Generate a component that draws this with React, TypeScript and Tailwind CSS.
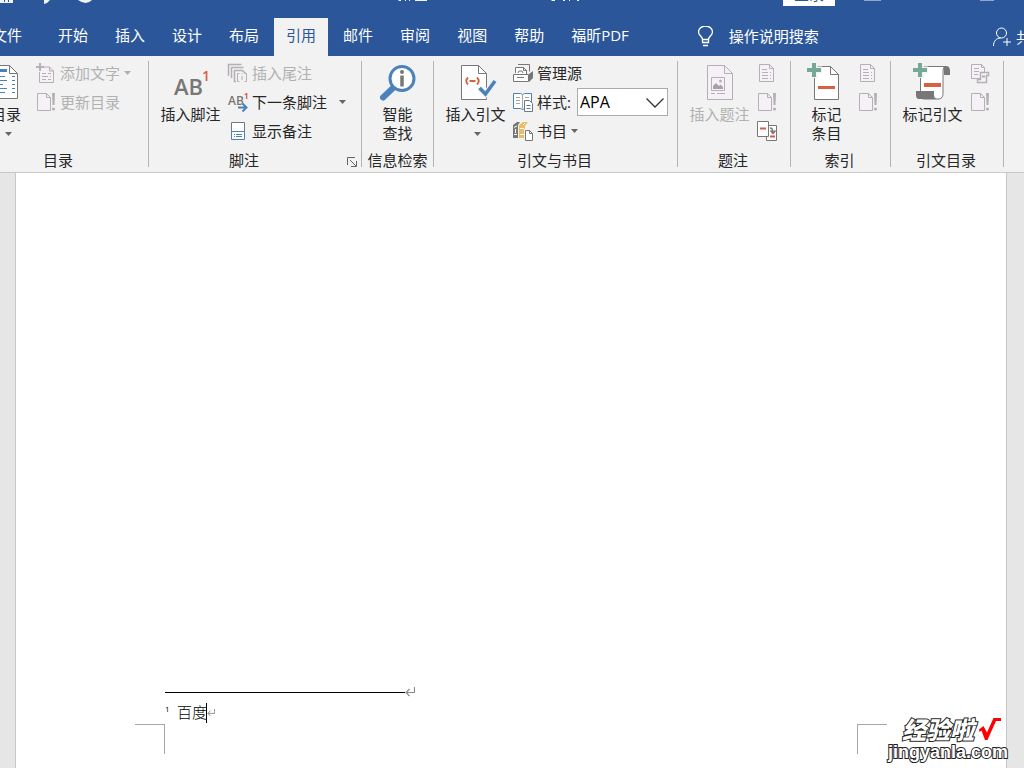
import type { ReactNode } from "react";

const GRAY = "#777777";
const MUTED = "#b5b0b5";
const BLUE = "#4a82bd";
const ORANGE = "#d85f3f";
const GREEN = "#74a897";

const tabs = ["开始", "插入", "设计", "布局", "引用", "邮件", "审阅", "视图", "帮助", "福昕PDF"];

function BigIcon({ children }: { children: ReactNode }) {
  return (
    <svg width="40" height="44" viewBox="0 0 40 44" fill="none" className="shrink-0 overflow-visible" aria-hidden="true">
      {children}
    </svg>
  );
}

function SmallIcon({ children }: { children: ReactNode }) {
  return (
    <svg width="20" height="20" viewBox="0 0 20 20" fill="none" className="shrink-0 overflow-visible" aria-hidden="true">
      {children}
    </svg>
  );
}

function Arrow({ className = "" }: { className?: string }) {
  return (
    <svg width="7" height="4" viewBox="0 0 7 4" className={`shrink-0 ${className}`} aria-hidden="true">
      <path d="M0 0h7L3.5 4z" fill="currentColor" />
    </svg>
  );
}

function TocIcon() {
  return (
    <BigIcon>
      <path d="M6.5 4.5h17l8 8v25h-25z" fill="#fff" stroke={GRAY} />
      <path d="M23.5 4.5v8h8" stroke={GRAY} />
      <path d="M9 8h12v3H9z" fill={BLUE} />
      <path
        d="M9 15.5h10M9 19.5h12M9 23.5h8M9 27.5h12M9 31.5h10M26 15.5h3M26 19.5h3M26 23.5h3M26 27.5h3M26 31.5h3"
        stroke={BLUE}
      />
    </BigIcon>
  );
}

function FootnoteIcon() {
  return (
    <BigIcon>
      <text x="3" y="34" fontSize="22" fontWeight="600" fill={GRAY}>AB</text>
      <text x="31" y="20" fontSize="14" fontWeight="600" fill={ORANGE}>1</text>
    </BigIcon>
  );
}

function LookupIcon() {
  return (
    <BigIcon>
      <path d="M15 27 5 36.5" stroke={BLUE} strokeWidth="6" strokeLinecap="round" />
      <circle cx="24" cy="17.5" r="12" fill="#fff" stroke={BLUE} strokeWidth="3" />
      <circle cx="24" cy="11" r="2" fill={GRAY} />
      <path d="M24 14.5v11" stroke={GRAY} strokeWidth="3.5" />
    </BigIcon>
  );
}

function CitationIcon() {
  return (
    <BigIcon>
      <path d="M5.5 4.5h17l8 8v26h-25z" fill="#fff" stroke={GRAY} />
      <path d="M22.5 4.5v8h8" stroke={GRAY} />
      <path d="M12 16.5q-3.500 3.500 0 7M21 16.5q3.500 3.500 0 7M13.5 20h6" stroke={ORANGE} strokeWidth="1.8" />
      <path d="m23.5 27 6 6 9.5-13" stroke="#f2f2f2" strokeWidth="6" />
      <path d="m23.5 27 6 6 9.5-13" stroke={BLUE} strokeWidth="3.5" />
    </BigIcon>
  );
}

function CaptionIcon() {
  return (
    <BigIcon>
      <path d="M7.5 4.5h17l8 8v26h-25z" fill="#f6f0f7" stroke={MUTED} />
      <path d="M24.5 4.5v8h8M11.5 16.5h13v13h-13z" stroke={MUTED} />
      <path d="M13 28v-3l3-3 3 3 1.5-1.5L23 26v2z" fill="#a6a1a6" />
      <circle cx="20.5" cy="20" r="1.5" fill={MUTED} />
      <path d="M11 32.5h4M17 32.5h8" stroke={MUTED} />
    </BigIcon>
  );
}

function MarkEntryIcon() {
  return (
    <BigIcon>
      <path d="M7.5 5.5h16l8 8v25h-24z" fill="#fff" stroke={GRAY} />
      <path d="M23.5 5.5v8h8" stroke={GRAY} />
      <path d="M7 1v16M-1 9h16" stroke="#f2f2f2" strokeWidth="7" />
      <path d="M7 2v14M0 9h14" stroke={GREEN} strokeWidth="4" />
      <path d="M11 26.5h17" stroke={ORANGE} strokeWidth="3" />
    </BigIcon>
  );
}

function MarkCitationIcon() {
  return (
    <BigIcon>
      <path d="M28 5h5q4 0 4 5v4h-6V9z" fill={GRAY} />
      <path d="M7.5 5.5h24q-2 2-1.5 8v19q0 5-4 5.5H11q-3.5 0-3.5-5z" fill="#fff" stroke={GRAY} />
      <path d="M3 30h18v4q0 4 4 4H6q-3 0-3-4z" fill={GRAY} />
      <path d="M7 1v16M-1 9h16" stroke="#f2f2f2" strokeWidth="7" />
      <path d="M7 2v14M0 9h14" stroke={GREEN} strokeWidth="4" />
      <path d="M11 24h17" stroke={ORANGE} strokeWidth="4" />
    </BigIcon>
  );
}

function AddTextIcon() {
  return (
    <SmallIcon>
      <path d="M3.5 9v10.5h14V8l-4-4H8" fill="#f6f0f7" stroke={MUTED} />
      <path d="M13.5 4v4h4M6 10.5h4M12 10.5h3M6 13.5h6M14 13.5h1M6 16.5h4M12 16.5h3" stroke={MUTED} />
      <path d="M4 0v8M0 4h8" stroke={MUTED} strokeWidth="2" />
    </SmallIcon>
  );
}

function UpdateIcon() {
  return (
    <SmallIcon>
      <path d="M1.5 1.5h9l4 4v13h-13z" fill="#f6f0f7" stroke={MUTED} />
      <path d="M10.5 1.5v4h4" stroke={MUTED} />
      <path d="M16 1h3l-.5 12h-2z" fill={MUTED} />
      <circle cx="17.5" cy="17" r="1.6" fill={MUTED} />
    </SmallIcon>
  );
}

function TableIcon() {
  return (
    <SmallIcon>
      <path d="M2.5 1.5h10l4 4v13h-14z" fill="#f6f0f7" stroke={MUTED} />
      <path d="M12.5 1.5v4h4M5 6.5h5M5 9.5h6M13 9.5h1M5 12.5h6M13 12.5h1M5 15.5h6M13 15.5h1" stroke={MUTED} />
    </SmallIcon>
  );
}

function CitationTableIcon() {
  return (
    <SmallIcon>
      <path d="M1.5 1.5h10l3 3v11h-13z" fill="#f6f0f7" stroke={MUTED} />
      <path d="M11.5 1.5v3h3M4 5.5h5M4 8.5h5M4 11.5h4" stroke={MUTED} />
      <path d="M10.5 9.5h8v3h-2v7h-9v-3h3z" fill="#f6f0f7" stroke={MUTED} strokeWidth="1.5" />
      <path d="M12 13.5h3" stroke={MUTED} strokeWidth="2" />
    </SmallIcon>
  );
}

function EndnoteIcon() {
  return (
    <SmallIcon>
      <path d="M.5 13V1.5h13M3.5 15V4.5h12M8 18.5H6.5v-11h8l3 3" stroke={MUTED} strokeWidth="1.5" />
      <path d="M11.5 10.5h-2v8h2M16.5 10.5h2v8h-2M14 13v4M14 10.5v1" stroke={MUTED} />
    </SmallIcon>
  );
}

function NextFootnoteIcon() {
  return (
    <SmallIcon>
      <text x="0" y="13" fontSize="12" fontWeight="600" fill={GRAY}>AB</text>
      <text x="16" y="7" fontSize="8" fontWeight="700" fill={ORANGE}>1</text>
      <path d="M10 15.5h8M14.5 11.5l4 4-4 4" stroke="#f2f2f2" strokeWidth="4" />
      <path d="M10 15.5h8M14.5 11.5l4 4-4 4" stroke={BLUE} strokeWidth="2" />
    </SmallIcon>
  );
}

function ShowNotesIcon() {
  return (
    <SmallIcon>
      <path d="M3.5 1.5h13v9h-13z" fill="#fff" stroke={GRAY} />
      <path d="M3.5 10.5h13v8h-13z" fill="#fff" stroke={BLUE} />
      <path d="M6 13.5h1M8 13.5h6M6 15.5h1M8 15.5h6" stroke={BLUE} />
    </SmallIcon>
  );
}

function SourcesIcon() {
  return (
    <SmallIcon>
      <path d="M5 1.5h11.5v7" stroke={GRAY} />
      <path d="M2.5 10V4.5h8l3 3V12" fill="#fff" stroke={GRAY} />
      <path d="M10.5 4.5v3h3M5 10l1-2h3l1 2" stroke={GRAY} />
      <path d="M.5 11.5h15v7H.5z" fill="#fff" stroke={GRAY} />
      <path d="m16 11 4-3v7l-4 4z" fill={GRAY} />
      <path d="M4 14.5h7" stroke={GRAY} />
    </SmallIcon>
  );
}

function StyleIcon() {
  return (
    <SmallIcon>
      <path d="M.5 1.5h7l2 1 2-1h7v15h-7l-2 1-2-1h-7z" fill="#fff" stroke={BLUE} />
      <path d="M9.5 2.5v14M3 5.5h4M3 8.5h4M3 11.5h4M12 5.5h4M12 8.5h1" stroke="#a6a6a6" />
      <path d="M11.5 8.5h5l3 3v8h-8z" fill="#fff" stroke={GRAY} />
      <path d="M13.5 13.5h4M13.5 16.5h4" stroke={BLUE} />
    </SmallIcon>
  );
}

function BookIcon() {
  return (
    <SmallIcon>
      <path d="M0 4 4 1h3L5 4v13H0z" fill={GRAY} />
      <path d="m6 4 4-3h5l-3 4v12H6z" fill="#e8bd67" />
      <path d="M1 6.5 4 5M1 13.5h3M7 7.5h4M7 13.5h4M10 4l2-2" stroke="#fff" />
      <path d="M2.5 8v4" stroke="#fff" />
      <path d="M11 8h6l4 4v8H11z" fill="#f2f2f2" />
      <path d="M12.5 9.5h4l3 3v7h-7z" fill="#fff" stroke={GRAY} />
      <path d="M16.5 9.5v3h3" stroke={GRAY} />
    </SmallIcon>
  );
}

function CrossReferenceIcon() {
  return (
    <SmallIcon>
      <path d="M9.5 4.5h10v15h-10z" fill="#fff" stroke={GRAY} />
      <path d="M.5.5h11v15H.5z" fill="#fff" stroke={GRAY} />
      <path d="M3 7.5h6M13 15.5h5" stroke={ORANGE} strokeWidth="2" />
      <path d="M13 7c2 0 3 1 3 5M13.5 9.5l2.5 3 2.5-3" stroke={GRAY} strokeWidth="1.5" />
    </SmallIcon>
  );
}

type BigButtonProps = {
  icon: ReactNode;
  lines: string[];
  width: string;
  menu?: boolean;
  disabled?: boolean;
};

function BigButton({ icon, lines, width, menu, disabled }: BigButtonProps) {
  return (
    <button
      type="button"
      disabled={disabled}
      className={`flex shrink-0 flex-col items-center leading-[19px] whitespace-nowrap disabled:text-[#b1b1b1] ${width}`}
    >
      {icon}
      {lines.map((line) => (
        <span key={line}>{line}</span>
      ))}
      {menu && <Arrow className="mt-2 ml-1 text-[#666]" />}
    </button>
  );
}

type SmallButtonProps = {
  icon: ReactNode;
  text?: string;
  label?: string;
  disabled?: boolean;
  children?: ReactNode;
};

function SmallButton({ icon, text, label, disabled, children }: SmallButtonProps) {
  return (
    <button
      type="button"
      disabled={disabled}
      aria-label={label}
      className="flex h-6 items-center gap-1 leading-6 whitespace-nowrap disabled:text-[#b1b1b1]"
    >
      {icon}
      {text}
      {children}
    </button>
  );
}

type GroupProps = {
  title: string;
  className: string;
  launcher?: boolean;
  children: ReactNode;
};

function Group({ title, className, launcher, children }: GroupProps) {
  return (
    <section className={`flex h-[106px] shrink-0 flex-col border-r border-[#b4b4b4] ${className}`}>
      <div className="flex flex-1 items-start">{children}</div>
      <div className="flex leading-[14px]">
        <h2 className="flex-1 text-center whitespace-nowrap">{title}</h2>
        {launcher && (
          <button type="button" aria-label={title} className="flex w-[22px] items-end justify-end pr-1">
            <svg width="10" height="10" viewBox="0 0 10 10" fill="none" stroke="#666" aria-hidden="true">
              <path d="M.5 8V.5H8M3 3l6 6M9.5 4v5.5H4" />
            </svg>
          </button>
        )}
      </div>
    </section>
  );
}

function Column({ children }: { children: ReactNode }) {
  return <div className="flex flex-col gap-[5px]">{children}</div>;
}

function TitleBar() {
  return (
    <div className="flex h-[18px] items-start overflow-hidden">
      <svg width="581" height="6" viewBox="0 0 581 6" fill="#f2f2f2" className="shrink-0" aria-hidden="true">
        <path d="M0 0h13v3H0z" />
        <path d="M4 0h1v2H4zM8 0h1v2H8z" fill="#2b579a" />
        <path d="M44 0h6q-2 3-6 4zM78 0h14q-6 6-14 0z" />
        <path d="M399 0h2v1h-3zM405 0h1v1h-1zM409 0h1v1h-1zM415 0h12v1h-12zM552 0h3v1h-4zM563 0h2v1h-2zM569 0h1v1h-1zM577 0h2v1h-2z" />
      </svg>
      <button type="button" className="-mt-[18px] ml-auto h-6 w-[52px] shrink-0 bg-white text-center leading-6 text-[#2b579a]">
        登录
      </button>
      <svg width="189" height="2" viewBox="0 0 189 2" fill="#8fa8cd" className="shrink-0" aria-hidden="true">
        <path d="M29 0h17v1H29zM145 0h14v1h-14z" />
      </svg>
    </div>
  );
}

function TabBar() {
  return (
    <nav className="-ml-5 flex h-[38px] items-stretch gap-[3px] leading-[35px] whitespace-nowrap">
      <a href="#file" className="mr-[9px] px-3">文件</a>
      {tabs.map((tab) => (
        <a
          key={tab}
          href="#tab"
          aria-current={tab === "引用" ? "page" : undefined}
          className={tab === "引用" ? "bg-[#f2f2f2] px-3 text-[#2b579a]" : "px-3"}
        >
          {tab}
        </a>
      ))}
      <button type="button" className="ml-[54px] flex items-center gap-4 pb-0.5 leading-9">
        <svg width="15" height="21" viewBox="0 0 15 21" fill="none" stroke="#fff" aria-hidden="true">
          <path d="M4.5 13.5c0-3-4-4-4-7.5a7 6 0 0 1 14 0c0 3.5-4 4.5-4 7.5zM4.5 13.5v3h6v-3M5 19.5h5" strokeWidth="1.3" />
        </svg>
        操作说明搜索
      </button>
      <button type="button" className="mr-[-22px] ml-auto flex items-center gap-1 leading-9">
        <svg width="19" height="20" viewBox="0 0 19 20" fill="none" stroke="#fff" aria-hidden="true">
          <circle cx="8.5" cy="6" r="5" />
          <path d="M.5 19c0-5 3-8 7-8M14 11v8M10 15h8" />
        </svg>
        共享
      </button>
    </nav>
  );
}

function Ribbon() {
  return (
    <div className="flex overflow-hidden border-b border-[#c8c8c8] bg-[#f2f2f2] py-[5px] text-[#262626]">
      <Group title="目录" className="-ml-8 w-[181px] pl-3.5 [&>div:last-child]:-ml-3.5">
        <BigButton icon={<TocIcon />} lines={["目录"]} width="w-12" menu />
        <div className="pl-1.5">
          <Column>
            <SmallButton icon={<AddTextIcon />} text="添加文字" disabled>
              <Arrow />
            </SmallButton>
            <SmallButton icon={<UpdateIcon />} text="更新目录" disabled />
          </Column>
        </div>
      </Group>

      <Group title="脚注" className="w-[213px]" launcher>
        <BigButton icon={<FootnoteIcon />} lines={["插入脚注"]} width="ml-1 w-[75px]" />
        <Column>
          <SmallButton icon={<EndnoteIcon />} text="插入尾注" disabled />
          <SmallButton icon={<NextFootnoteIcon />} text="下一条脚注">
            <Arrow className="ml-2 text-[#666]" />
          </SmallButton>
          <SmallButton icon={<ShowNotesIcon />} text="显示备注" />
        </Column>
      </Group>

      <Group title="信息检索" className="w-[72px]">
        <BigButton icon={<LookupIcon />} lines={["智能", "查找"]} width="w-full" />
      </Group>

      <Group title="引文与书目" className="w-[244px] [&_h2]:pr-0.5">
        <BigButton icon={<CitationIcon />} lines={["插入引文"]} width="ml-1 w-[75px]" menu />
        <Column>
          <SmallButton icon={<SourcesIcon />} text="管理源" />
          <div className="flex h-6 items-center gap-1">
            <StyleIcon />
            <label htmlFor="citation-style" className="w-9 whitespace-nowrap">样式:</label>
            <div className="relative">
              <select
                id="citation-style"
                defaultValue="APA"
                className="block h-7 w-[91px] appearance-none border border-[#ababab] bg-white px-0.5 text-base text-black outline-none"
              >
                <option>APA</option>
              </select>
              <svg
                width="18"
                height="10"
                viewBox="0 0 18 10"
                fill="none"
                className="pointer-events-none absolute top-[10px] right-1"
                aria-hidden="true"
              >
                <path d="m.5.5 8.5 8.5 8.5-8.5" stroke="#333" strokeWidth="1.3" />
              </svg>
            </div>
          </div>
          <SmallButton icon={<BookIcon />} text="书目">
            <Arrow className="text-[#666]" />
          </SmallButton>
        </Column>
      </Group>

      <Group title="题注" className="w-[113px] [&_h2]:pr-0.5">
        <BigButton icon={<CaptionIcon />} lines={["插入题注"]} width="ml-1 w-[75px]" disabled />
        <Column>
          <SmallButton icon={<TableIcon />} label="插入表目录" disabled />
          <SmallButton icon={<UpdateIcon />} label="更新表格" disabled />
          <SmallButton icon={<CrossReferenceIcon />} label="交叉引用" />
        </Column>
      </Group>

      <Group title="索引" className="w-[100px] [&_h2]:pr-0.5">
        <BigButton icon={<MarkEntryIcon />} lines={["标记", "条目"]} width="ml-1 w-[63px]" />
        <Column>
          <SmallButton icon={<TableIcon />} label="插入索引" disabled />
          <SmallButton icon={<UpdateIcon />} label="更新索引" disabled />
        </Column>
      </Group>

      <Group title="引文目录" className="w-[113px] [&_h2]:pr-0.5">
        <BigButton icon={<MarkCitationIcon />} lines={["标记引文"]} width="ml-1 w-[75px]" />
        <Column>
          <SmallButton icon={<CitationTableIcon />} label="插入引文目录" disabled />
          <SmallButton icon={<UpdateIcon />} label="更新引文目录" disabled />
        </Column>
      </Group>
    </div>
  );
}

function ReturnMark({ size }: { size: number }) {
  return (
    <svg width={size} height={size} viewBox="0 0 10 10" fill="none" stroke="#8c8c8c" className="shrink-0" aria-hidden="true">
      <path d="M9.5 0v5.5H1M4.5 2 1 5.5 4.5 9" strokeWidth="1.2" />
    </svg>
  );
}

function Watermark() {
  return (
    <div className="absolute right-4 bottom-1.5 flex flex-col items-end text-white [paint-order:stroke_fill] [-webkit-text-stroke:2px_#222]">
      <div className="flex h-6 items-center gap-1 pr-1.5 text-[24px] leading-6 font-black italic">
        经验啦
        <svg width="24" height="24" viewBox="0 0 24 24" fill="none" className="shrink-0" aria-hidden="true">
          <path d="M1 11.5 5.500 8 9 14.500 15.500 0H23v3h-5L9.500 22H7L3.500 12.500 1.500 14z" fill="#f00" />
        </svg>
      </div>
      <span className="font-['Liberation_Sans',sans-serif] text-[18px] leading-5 font-bold">jingyanla.com</span>
    </div>
  );
}

function DocumentPage() {
  return (
    <main className="flex flex-1 bg-[#e6e6e6] pr-[17px] pl-[15px]">
      <article className="flex flex-1 flex-col justify-end border-x border-[#c6c6c6] bg-white px-[119px] pb-[14px]">
        <div className="flex items-center pl-[30px]">
          <hr className="w-60 border-black" />
          <ReturnMark size={10} />
        </div>
        <p className="flex h-[27px] items-center pt-1 pl-[30px] text-black">
          <sup className="w-3 text-[8px] leading-none">1</sup>
          <span className="font-light">百度</span>
          <span className="-ml-px h-5 w-px bg-black" />
          <ReturnMark size={8} />
        </p>
        <div className="flex justify-between">
          <span className="size-[30px] border-t border-r border-[#a6a6a6]" />
          <span className="size-[30px] border-t border-l border-[#a6a6a6]" />
        </div>
      </article>
    </main>
  );
}

export default function App() {
  return (
    <div className="relative flex min-h-screen flex-col overflow-hidden bg-[#e6e6e6] font-['Open_Sans','Noto_Sans_CJK_SC',sans-serif] text-[15px]">
      <header className="bg-[#2b579a] text-white">
        <TitleBar />
        <TabBar />
      </header>
      <Ribbon />
      <DocumentPage />
      <Watermark />
    </div>
  );
}
